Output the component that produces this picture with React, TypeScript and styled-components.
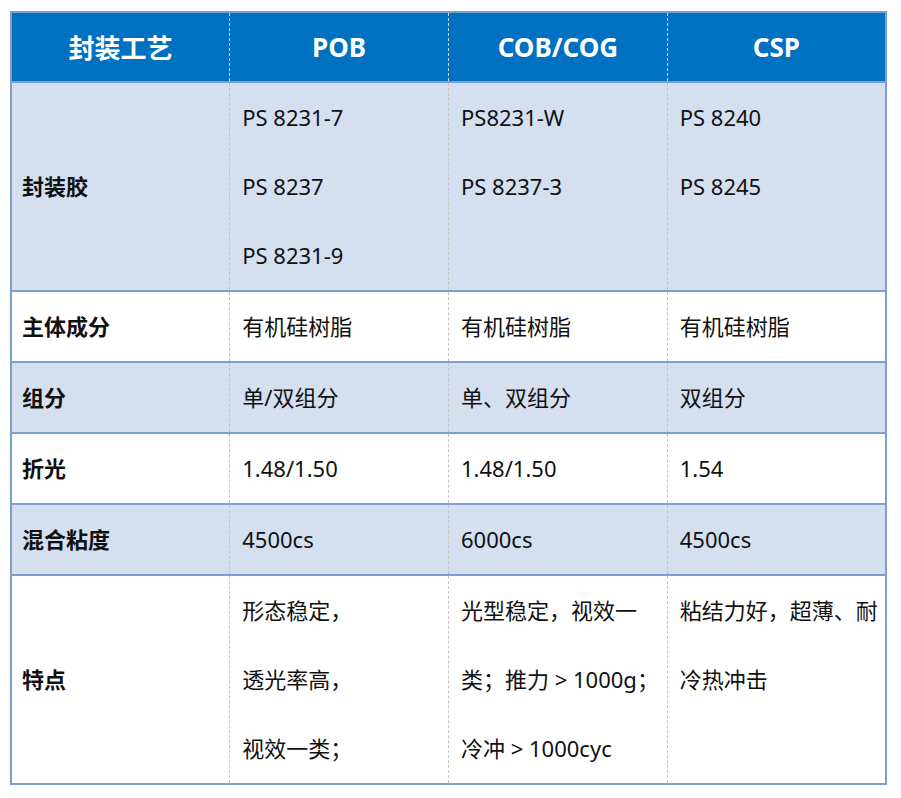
import React from "react";
import styled, { createGlobalStyle } from "styled-components";

const Global = createGlobalStyle`
  html, body { margin: 0; padding: 0; background: #ffffff; }
  body { font-family: "Noto Sans", "Noto Sans CJK SC", sans-serif; }
`;

const Page = styled.div`
  padding: 11px 0 0 10px;
`;

const Table = styled.table`
  width: 877px;
  table-layout: fixed;
  border-collapse: collapse;
  border: 2px solid #7f9fcf;
  font-family: "Noto Sans", "Noto Sans CJK SC", sans-serif;
  color: #111111;
`;

const HeadCell = styled.th`
  background: #0070c0;
  color: #ffffff;
  font-size: 26px;
  font-weight: 700;
  height: 68px;
  padding: 0;
  text-align: center;
  vertical-align: middle;
  border-bottom: 2px solid #7f9fcf;
  border-left: 1px dashed #cfdcee;
  &:first-child { border-left: none; }
`;

const Row = styled.tr<{ $shaded: boolean }>`
  background: ${(p) => (p.$shaded ? "#d4dff0" : "#ffffff")};
  border-top: 2px solid #7f9fcf;
`;

const LabelCell = styled.td`
  font-size: 22px;
  font-weight: 700;
  padding: 0 0 0 10px;
  vertical-align: middle;
  line-height: 69px;
  white-space: nowrap;
`;

const ValueCell = styled.td`
  font-size: 22px;
  font-weight: 400;
  padding: 0 0 0 12px;
  vertical-align: top;
  border-left: 1px dashed #c4c4c4;
  white-space: nowrap;
`;

const Line = styled.div`
  height: 69px;
  line-height: 69px;
`;

type RowData = { label: string; cols: string[][] };

const heads = ["封装工艺", "POB", "COB/COG", "CSP"];

const rows: RowData[] = [
  {
    label: "封装胶",
    cols: [
      ["PS 8231-7", "PS 8237", "PS 8231-9"],
      ["PS8231-W", "PS 8237-3"],
      ["PS 8240", "PS 8245"],
    ],
  },
  { label: "主体成分", cols: [["有机硅树脂"], ["有机硅树脂"], ["有机硅树脂"]] },
  { label: "组分", cols: [["单/双组分"], ["单、双组分"], ["双组分"]] },
  { label: "折光", cols: [["1.48/1.50"], ["1.48/1.50"], ["1.54"]] },
  { label: "混合粘度", cols: [["4500cs"], ["6000cs"], ["4500cs"]] },
  {
    label: "特点",
    cols: [
      ["形态稳定，", "透光率高，", "视效一类；"],
      ["光型稳定，视效一", "类；推力 > 1000g；", "冷冲 > 1000cyc"],
      ["粘结力好，超薄、耐", "冷热冲击"],
    ],
  },
];

export default function App() {
  return (
    <>
      <Global />
      <Page>
        <Table>
          <thead>
            <tr>
              {heads.map((h) => (
                <HeadCell key={h}>{h}</HeadCell>
              ))}
            </tr>
          </thead>
          <tbody>
            {rows.map((r, i) => (
              <Row key={r.label} $shaded={i % 2 === 0}>
                <LabelCell>{r.label}</LabelCell>
                {r.cols.map((c, j) => (
                  <ValueCell key={j}>
                    {c.map((l, k) => (
                      <Line key={k}>{l}</Line>
                    ))}
                  </ValueCell>
                ))}
              </Row>
            ))}
          </tbody>
        </Table>
      </Page>
    </>
  );
}
